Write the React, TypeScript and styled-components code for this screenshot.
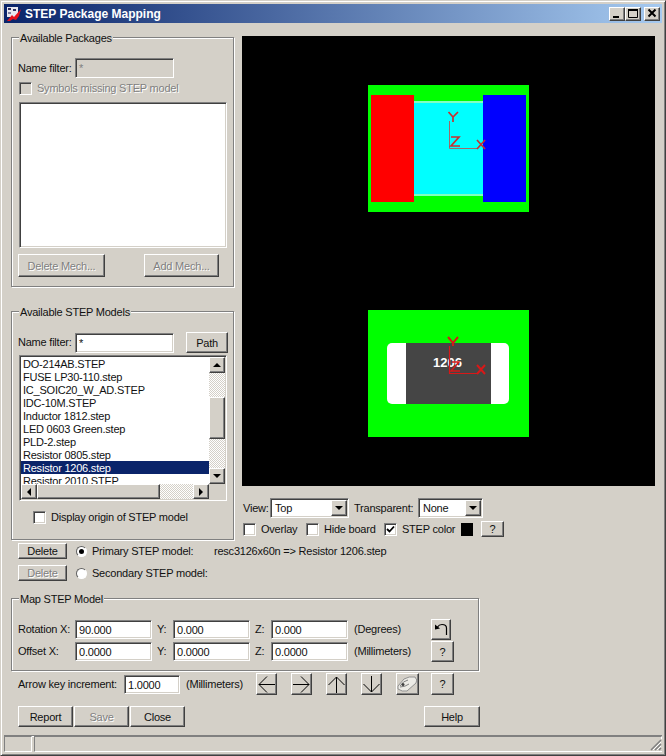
import React from "react";
import styled, { createGlobalStyle, css } from "styled-components";

const FACE = "#d4d0c8";

const GlobalStyle = createGlobalStyle`
  html, body {
    margin: 0;
    padding: 0;
    background: ${FACE};
  }
  * {
    box-sizing: border-box;
  }
`;

const raised = css`
  background: ${FACE};
  border: 1px solid;
  border-color: #ffffff #404040 #404040 #ffffff;
  box-shadow: inset -1px -1px 0 #808080;
`;

const sunken = css`
  border: 1px solid;
  border-color: #808080 #ffffff #ffffff #808080;
  box-shadow: inset 1px 1px 0 #404040, inset -1px -1px 0 ${FACE};
`;

const App: React.FC = () => {
  const models = [
    "DO-214AB.STEP",
    "FUSE LP30-110.step",
    "IC_SOIC20_W_AD.STEP",
    "IDC-10M.STEP",
    "Inductor 1812.step",
    "LED 0603 Green.step",
    "PLD-2.step",
    "Resistor 0805.step",
    "Resistor 1206.step",
    "Resistor 2010.STEP",
  ];

  return (
    <Dialog>
      <GlobalStyle />
      <TitleBar>
        <svg width="16" height="16" viewBox="0 0 16 16">
          <rect x="1" y="1" width="11" height="10" fill="#e8e8f0" />
          <rect x="2" y="2" width="3" height="2" fill="#303060" />
          <rect x="7" y="3" width="3" height="2" fill="#303060" />
          <rect x="2" y="6" width="3" height="2" fill="#8080a0" />
          <path d="M1 15 L6 9 L8 11 L15 3 L13 10 L10 14 L7 13 L4 15 Z" fill="#e8101c" />
        </svg>
        <TitleText>STEP Package Mapping</TitleText>
        <CaptionButtons>
          <CaptionButton>
            <svg width="13" height="11" viewBox="0 0 13 11">
              <rect x="2" y="8" width="6" height="2" fill="#000" />
            </svg>
          </CaptionButton>
          <CaptionButton>
            <svg width="13" height="11" viewBox="0 0 13 11">
              <path d="M1.5 1.5 H10.5 V9.5 H1.5 Z" fill="none" stroke="#000" />
              <rect x="1" y="1" width="10" height="2" fill="#000" />
            </svg>
          </CaptionButton>
          <CloseButton>
            <svg width="13" height="11" viewBox="0 0 13 11">
              <path d="M2.5 1.5 L9.5 8.5 M9.5 1.5 L2.5 8.5" stroke="#000" strokeWidth="2" />
            </svg>
          </CloseButton>
        </CaptionButtons>
      </TitleBar>

      <MainRow>
        <LeftColumn>
          <PackagesGroup>
            <GroupTitle>Available Packages</GroupTitle>
            <FilterRow>
              <FilterLabel>Name filter:</FilterLabel>
              <TextInput $width={99} $disabled>
                *
              </TextInput>
            </FilterRow>
            <MissingRow>
              <CheckBox $disabled />
              <DisabledLabel>Symbols missing STEP model</DisabledLabel>
            </MissingRow>
            <PackageList />
            <MechButtons>
              <Button $width={87} $height={23} $disabled>
                Delete Mech...
              </Button>
              <Button $width={75} $height={23} $disabled>
                Add Mech...
              </Button>
            </MechButtons>
          </PackagesGroup>

          <ModelsGroup>
            <GroupTitle>Available STEP Models</GroupTitle>
            <ModelFilterRow>
              <FilterLabel>Name filter:</FilterLabel>
              <TextInput $width={99}>*</TextInput>
              <PathButton $width={42} $height={21}>
                Path
              </PathButton>
            </ModelFilterRow>
            <ModelList>
              <ModelRows>
                {models.map((name, i) => (
                  <ModelRow key={name} $selected={i === 8}>
                    {name}
                  </ModelRow>
                ))}
              </ModelRows>
              <VScroll>
                <ScrollButton $size={16}>
                  <UpTriangle />
                </ScrollButton>
                <VTrack>
                  <VThumb />
                </VTrack>
                <ScrollButton $size={16}>
                  <DownTriangle />
                </ScrollButton>
              </VScroll>
              <HScroll>
                <ScrollButton $size={15}>
                  <LeftTriangle />
                </ScrollButton>
                <HThumb />
                <HTrack />
                <ScrollButton $size={15}>
                  <RightTriangle />
                </ScrollButton>
              </HScroll>
            </ModelList>
            <OriginRow>
              <CheckBox />
              <Label>Display origin of STEP model</Label>
            </OriginRow>
          </ModelsGroup>
        </LeftColumn>

        <RightColumn>
          <Viewer>
            <svg width="413" height="450" viewBox="242 36 413 450">
              <rect x="368" y="85" width="161" height="127" fill="#00ff00" />
              <rect x="414" y="103" width="69" height="91" fill="#00ffff" />
              <rect x="414" y="101" width="69" height="2" fill="#80ffc0" />
              <rect x="414" y="194" width="69" height="2" fill="#80ffc0" />
              <rect x="371" y="95" width="43" height="107" fill="#ff0000" />
              <rect x="483" y="95" width="43" height="107" fill="#0000ff" />
              <g fill="none" stroke="#c83030">
                <path d="M449.500 121 V148.500 H477" stroke="#a06868" />
                <path d="M448.500 112 L453 117 L458 112 M453 117 V122" strokeWidth="1.700" />
                <path d="M451 137 H459 L451 146 H460" strokeWidth="1.700" />
                <path d="M477 140 L485 149 M485 140 L477 149" strokeWidth="1.700" />
              </g>

              <rect x="368" y="310" width="161" height="127" fill="#00ff00" />
              <rect x="387" y="343" width="122" height="61" rx="5" fill="#ffffff" />
              <rect x="406" y="343" width="85" height="61" fill="#454545" />
              <ChipText x="433" y="367">
                1206
              </ChipText>
              <g fill="none" stroke="#d81818">
                <path d="M449.500 346 V373.500 H478" strokeWidth="1.200" />
                <path d="M448 337 L453 343 L458 337 M453 343 V346" strokeWidth="2" />
                <path d="M452 362 H459 L451 371 H460" strokeWidth="1.500" />
                <path d="M477 365 L485 374 M485 365 L477 374" strokeWidth="2" />
              </g>
            </svg>
          </Viewer>
          <ViewRow>
            <Label>View:</Label>
            <Select $width={79}>
              <SelectValue>Top</SelectValue>
              <SelectArrow>
                <DownTriangle />
              </SelectArrow>
            </Select>
            <TransparentLabel>Transparent:</TransparentLabel>
            <Select $width={65}>
              <SelectValue>None</SelectValue>
              <SelectArrow>
                <DownTriangle />
              </SelectArrow>
            </Select>
          </ViewRow>
          <OptionsRow>
            <CheckBox />
            <OptionLabel $width={45}>Overlay</OptionLabel>
            <CheckBox />
            <OptionLabel $width={60}>Hide board</OptionLabel>
            <CheckBox>
              <svg width="9" height="9" viewBox="0 0 9 9">
                <path d="M1 4 L3.500 6.500 L8 1.500" fill="none" stroke="#000" strokeWidth="1.800" />
              </svg>
            </CheckBox>
            <OptionLabel $width={59}>STEP color</OptionLabel>
            <ColorSwatch />
            <HelpSmall $width={23} $height={16}>
              ?
            </HelpSmall>
          </OptionsRow>
        </RightColumn>
      </MainRow>

      <ModelSlot>
        <Button $width={49} $height={16}>
          Delete
        </Button>
        <RadioButton $checked />
        <SlotLabel>Primary STEP model:</SlotLabel>
        <Label>resc3126x60n =&gt; Resistor 1206.step</Label>
      </ModelSlot>
      <SecondSlot>
        <Button $width={49} $height={16} $disabled>
          Delete
        </Button>
        <RadioButton />
        <SlotLabel>Secondary STEP model:</SlotLabel>
      </SecondSlot>

      <MapGroup>
        <GroupTitle>Map STEP Model</GroupTitle>
        <MapRow>
          <AxisName>Rotation X:</AxisName>
          <TextInput $width={77} $height={19}>
            90.000
          </TextInput>
          <AxisLabel>Y:</AxisLabel>
          <TextInput $width={77} $height={19}>
            0.000
          </TextInput>
          <AxisLabel>Z:</AxisLabel>
          <TextInput $width={77} $height={19}>
            0.000
          </TextInput>
          <UnitLabel>(Degrees)</UnitLabel>
          <IconButton $width={20} $height={21}>
            <svg width="14" height="15" viewBox="0 0 14 15">
              <path d="M12.500 13 V6 Q12.500 2.500 8 2.500 Q5 2.500 3.500 5" fill="none" stroke="#000" strokeWidth="1.200" />
              <path d="M1 2.500 L6 6.500 L1 7.500 Z" fill="#000" />
            </svg>
          </IconButton>
        </MapRow>
        <MapRowSecond>
          <AxisName>Offset X:</AxisName>
          <TextInput $width={77} $height={19}>
            0.0000
          </TextInput>
          <AxisLabel>Y:</AxisLabel>
          <TextInput $width={77} $height={19}>
            0.0000
          </TextInput>
          <AxisLabel>Z:</AxisLabel>
          <TextInput $width={77} $height={19}>
            0.0000
          </TextInput>
          <UnitLabel>(Millimeters)</UnitLabel>
          <IconButton $width={23} $height={21}>
            ?
          </IconButton>
        </MapRowSecond>
      </MapGroup>

      <ArrowRow>
        <ArrowKeyLabel>Arrow key increment:</ArrowKeyLabel>
        <TextInput $width={56} $height={19}>
          1.0000
        </TextInput>
        <ArrowUnit>(Millimeters)</ArrowUnit>
        <ArrowButton>
          <svg width="19" height="19" viewBox="0 0 19 19">
            <path d="M18 9.500 H2 M10 1.500 L2 9.500 L10 17.500" fill="none" stroke="#000" />
          </svg>
        </ArrowButton>
        <ArrowButton>
          <svg width="19" height="19" viewBox="0 0 19 19">
            <path d="M1 9.500 H17 M9 1.500 L17 9.500 L9 17.500" fill="none" stroke="#000" />
          </svg>
        </ArrowButton>
        <ArrowButton>
          <svg width="19" height="19" viewBox="0 0 19 19">
            <path d="M9.500 18 V2 M1.500 10 L9.500 2 L17.500 10" fill="none" stroke="#000" />
          </svg>
        </ArrowButton>
        <ArrowButton>
          <svg width="19" height="19" viewBox="0 0 19 19">
            <path d="M9.500 1 V17 M1.500 9 L9.500 17 L17.500 9" fill="none" stroke="#000" />
          </svg>
        </ArrowButton>
        <EyeButton>
          <svg width="21" height="17" viewBox="0 0 21 17">
            <path d="M1 10 L7 3 Q12 0 18 1 Q21 4 19 7 L10 15 Q5 16 1 13 Z" fill="#ecebe6" stroke="#909090" />
            <path d="M3 10 Q6 5 11 4 M3 11 Q8 11 12 8" fill="none" stroke="#808080" />
            <circle cx="6" cy="8.500" r="1.500" fill="#404040" />
          </svg>
        </EyeButton>
        <HelpArrowButton $width={23} $height={22}>
          ?
        </HelpArrowButton>
      </ArrowRow>

      <FooterRow>
        <Button $width={55} $height={21}>
          Report
        </Button>
        <SaveButton $width={55} $height={21} $disabled>
          Save
        </SaveButton>
        <SaveButton $width={55} $height={21}>
          Close
        </SaveButton>
        <HelpButton $width={56} $height={21}>
          Help
        </HelpButton>
      </FooterRow>

      <StatusBar>
        <StatusPanel $width={28} />
        <StatusPanel $grow />
        <Grip>
          <svg width="12" height="12" viewBox="0 0 12 12">
            <path d="M11 1 L1 11 M11 5 L5 11 M11 9 L9 11" stroke="#808080" strokeWidth="1.500" />
            <path d="M11 3 L3 11 M11 7 L7 11" stroke="#ffffff" />
          </svg>
        </Grip>
      </StatusBar>
    </Dialog>
  );
};

export default App;

const Dialog = styled.div`
  position: relative;
  display: flex;
  flex-direction: column;
  width: 666px;
  height: 756px;
  padding: 4px 4px 3px;
  background: ${FACE};
  border: 1px solid;
  border-color: ${FACE} #404040 #404040 ${FACE};
  box-shadow: inset 1px 1px 0 #ffffff, inset -1px -1px 0 #808080;
  font-family: "Liberation Sans", Arial, sans-serif;
  font-size: 11px;
  letter-spacing: -0.22px;
  color: #111111;
  overflow: hidden;
  margin: 0;
`;

const TitleBar = styled.div`
  display: flex;
  align-items: center;
  flex: none;
  height: 19px;
  margin: -1px -1px 0;
  padding: 0 2px 0 2px;
  background: linear-gradient(90deg, #0a246a, #a6caf0);
`;

const TitleText = styled.span`
  margin-left: 3px;
  font-weight: 700;
  font-size: 12px;
  letter-spacing: 0;
  color: #ffffff;
`;

const CaptionButtons = styled.div`
  display: flex;
  margin-left: auto;
`;

const CaptionButton = styled.div`
  ${raised}
  display: flex;
  align-items: center;
  justify-content: center;
  width: 16px;
  height: 14px;
`;

const CloseButton = styled(CaptionButton)`
  margin-left: 3px;
`;

const MainRow = styled.div`
  display: flex;
  gap: 8px;
  margin: 13px 0 0 6px;
`;

const LeftColumn = styled.div`
  display: flex;
  flex-direction: column;
  gap: 24px;
  width: 223px;
  padding-top: 1px;
`;

const RightColumn = styled.div`
  display: flex;
  flex-direction: column;
  width: 413px;
`;

const GroupBox = styled.div`
  position: relative;
  border: 1px solid #808080;
  box-shadow: 1px 1px 0 #ffffff, inset 1px 1px 0 #ffffff;
`;

const GroupTitle = styled.span`
  position: absolute;
  top: -7px;
  left: 7px;
  padding: 0 1px;
  background: ${FACE};
  line-height: 14px;
  white-space: nowrap;
`;

const PackagesGroup = styled(GroupBox)`
  height: 250px;
  padding: 20px 6px 0;
`;

const ModelsGroup = styled(GroupBox)`
  height: 229px;
  padding: 20px 6px 0;
`;

const MapGroup = styled(GroupBox)`
  width: 468px;
  height: 73px;
  margin: 17px 0 0 6px;
  padding: 20px 6px 0;
`;

const Label = styled.span`
  line-height: 13px;
  white-space: nowrap;
`;

const DisabledLabel = styled(Label)`
  color: #808080;
  text-shadow: 1px 1px 0 #ffffff;
`;

const FilterRow = styled.div`
  display: flex;
  align-items: center;
  height: 20px;
`;

const FilterLabel = styled(Label)`
  width: 57px;
  flex: none;
`;

const ModelFilterRow = styled.div`
  display: flex;
  align-items: center;
  height: 21px;
`;

const TextInput = styled.div<{ $width: number; $height?: number; $disabled?: boolean }>`
  ${sunken}
  flex: none;
  width: ${(p) => p.$width}px;
  height: ${(p) => p.$height ?? 20}px;
  padding: 3px 0 0 3px;
  line-height: 13px;
  background: ${(p) => (p.$disabled ? FACE : "#ffffff")};
  color: ${(p) => (p.$disabled ? "#808080" : "#111111")};
`;

const MissingRow = styled.div`
  display: flex;
  align-items: center;
  gap: 5px;
  height: 13px;
  margin: 4px 0 0 1px;
`;

const CheckBox = styled.div<{ $disabled?: boolean }>`
  ${sunken}
  display: flex;
  align-items: center;
  justify-content: center;
  flex: none;
  width: 13px;
  height: 13px;
  background: ${(p) => (p.$disabled ? FACE : "#ffffff")};
`;

const PackageList = styled.div`
  ${sunken}
  width: 208px;
  height: 146px;
  margin: 7px 0 0 1px;
  background: #ffffff;
`;

const MechButtons = styled.div`
  display: flex;
  gap: 39px;
  margin-top: 6px;
`;

const Button = styled.div<{ $width: number; $height: number; $disabled?: boolean }>`
  ${raised}
  display: flex;
  align-items: center;
  justify-content: center;
  flex: none;
  width: ${(p) => p.$width}px;
  height: ${(p) => p.$height}px;
  white-space: nowrap;
  ${(p) =>
    p.$disabled &&
    css`
      color: #808080;
      text-shadow: 1px 1px 0 #ffffff;
    `}
`;

const PathButton = styled(Button)`
  margin-left: 12px;
`;

const ModelList = styled.div`
  ${sunken}
  display: grid;
  grid-template-columns: 188px 16px;
  grid-template-rows: 127px 15px;
  width: 208px;
  height: 146px;
  margin: 2px 0 0 1px;
  padding: 1px;
  background: ${FACE};
`;

const ModelRows = styled.div`
  overflow: hidden;
  background: #ffffff;
`;

const ModelRow = styled.div<{ $selected?: boolean }>`
  height: 13px;
  padding-left: 2px;
  line-height: 15px;
  white-space: nowrap;
  background: ${(p) => (p.$selected ? "#0a246a" : "transparent")};
  color: ${(p) => (p.$selected ? "#ffffff" : "#111111")};
`;

const VScroll = styled.div`
  display: flex;
  flex-direction: column;
`;

const ScrollButton = styled.div<{ $size: number }>`
  ${raised}
  display: flex;
  align-items: center;
  justify-content: center;
  flex: none;
  width: 16px;
  height: ${(p) => p.$size}px;
`;

const hatch = css`
  background: repeating-conic-gradient(#ffffff 0 25%, ${FACE} 0 50%) 0 0 / 2px 2px;
`;

const VTrack = styled.div`
  ${hatch}
  flex: 1;
  padding-top: 24px;
`;

const VThumb = styled.div`
  ${raised}
  height: 42px;
`;

const HScroll = styled.div`
  display: flex;
  grid-column: 1 / 2;
`;

const HThumb = styled.div`
  ${raised}
  width: 123px;
`;

const HTrack = styled.div`
  ${hatch}
  flex: 1;
`;

const triangle = css`
  width: 0;
  height: 0;
  border-style: solid;
  border-color: transparent;
`;

const UpTriangle = styled.div`
  ${triangle}
  border-width: 0 4px 4px;
  border-bottom-color: #000000;
`;

const DownTriangle = styled.div`
  ${triangle}
  border-width: 4px 4px 0;
  border-top-color: #000000;
`;

const LeftTriangle = styled.div`
  ${triangle}
  border-width: 4px 4px 4px 0;
  border-right-color: #000000;
`;

const RightTriangle = styled.div`
  ${triangle}
  border-width: 4px 0 4px 4px;
  border-left-color: #000000;
`;

const OriginRow = styled.div`
  display: flex;
  align-items: center;
  gap: 5px;
  margin: 10px 0 0 15px;
`;

const Viewer = styled.div`
  height: 450px;
  background: #000000;
  svg {
    display: block;
  }
`;

const ChipText = styled.text`
  font-size: 13px;
  font-weight: 700;
  letter-spacing: 0;
  fill: #ffffff;
`;

const ViewRow = styled.div`
  display: flex;
  align-items: center;
  height: 20px;
  margin: 12px 0 0 1px;
  ${Label} {
    width: 27px;
  }
`;

const TransparentLabel = styled(Label)`
  && {
    width: 64px;
  }
  margin-left: 5px;
`;

const Select = styled.div<{ $width: number }>`
  ${sunken}
  display: flex;
  align-items: center;
  width: ${(p) => p.$width}px;
  height: 20px;
  padding: 1px;
  background: #ffffff;
`;

const SelectValue = styled.span`
  flex: 1;
  padding-left: 3px;
`;

const SelectArrow = styled.div`
  ${raised}
  display: flex;
  align-items: center;
  justify-content: center;
  width: 16px;
  height: 16px;
`;

const OptionsRow = styled.div`
  display: flex;
  align-items: center;
  height: 16px;
  margin: 3px 0 0 1px;
`;

const OptionLabel = styled(Label)<{ $width: number }>`
  width: ${(p) => p.$width}px;
  margin-left: 5px;
`;

const ColorSwatch = styled.div`
  flex: none;
  width: 12px;
  height: 13px;
  background: #000000;
`;

const HelpSmall = styled(Button)`
  margin-left: 8px;
`;

const ModelSlot = styled.div`
  display: flex;
  align-items: center;
  margin: 3px 0 0 13px;
`;

const SecondSlot = styled(ModelSlot)`
  margin-top: 6px;
`;

const RadioButton = styled.div<{ $checked?: boolean }>`
  display: flex;
  align-items: center;
  justify-content: center;
  flex: none;
  width: 11px;
  height: 11px;
  margin-left: 9px;
  border-radius: 50%;
  border: 1px solid;
  border-color: #606060 #ffffff #ffffff #606060;
  background: #ffffff;
  &::after {
    content: "";
    width: 5px;
    height: 5px;
    border-radius: 50%;
    background: ${(p) => (p.$checked ? "#000000" : "transparent")};
  }
`;

const SlotLabel = styled(Label)`
  width: 122px;
  margin-left: 5px;
`;

const MapRow = styled.div`
  display: flex;
  align-items: center;
  height: 21px;
`;

const MapRowSecond = styled(MapRow)`
  margin-top: 1px;
`;

const AxisName = styled(Label)`
  width: 57px;
  flex: none;
`;

const AxisLabel = styled(Label)`
  width: 16px;
  margin-left: 5px;
`;

const UnitLabel = styled(Label)`
  width: 77px;
  margin-left: 6px;
`;

const IconButton = styled(Button)``;

const ArrowRow = styled.div`
  display: flex;
  align-items: center;
  margin: 2px 0 0 13px;
`;

const ArrowKeyLabel = styled(Label)`
  width: 106px;
  flex: none;
`;

const ArrowUnit = styled(Label)`
  width: 70px;
  margin-left: 6px;
`;

const ArrowButton = styled.div`
  ${raised}
  display: flex;
  align-items: center;
  justify-content: center;
  flex: none;
  width: 21px;
  height: 22px;
  margin-right: 14px;
`;

const EyeButton = styled(ArrowButton)`
  width: 23px;
  margin-right: 12px;
`;

const HelpArrowButton = styled(Button)``;

const FooterRow = styled.div`
  display: flex;
  gap: 1px;
  margin: 11px 0 0 13px;
`;

const SaveButton = styled(Button)``;

const HelpButton = styled(Button)`
  margin-left: 238px;
`;

const StatusBar = styled.div`
  position: relative;
  display: flex;
  gap: 2px;
  flex: none;
  height: 17px;
  margin: auto -1px 0;
  border-top: 1px solid #808080;
  box-shadow: inset 0 1px 0 #ffffff;
`;

const StatusPanel = styled.div<{ $width?: number; $grow?: boolean }>`
  width: ${(p) => (p.$width ? `${p.$width}px` : "auto")};
  flex: ${(p) => (p.$grow ? 1 : "none")};
  border: 1px solid;
  border-color: #808080 #ffffff #ffffff #808080;
`;

const Grip = styled.div`
  position: absolute;
  right: 0;
  bottom: 1px;
  width: 12px;
  height: 12px;
  background: ${FACE};
  svg {
    display: block;
  }
`;
